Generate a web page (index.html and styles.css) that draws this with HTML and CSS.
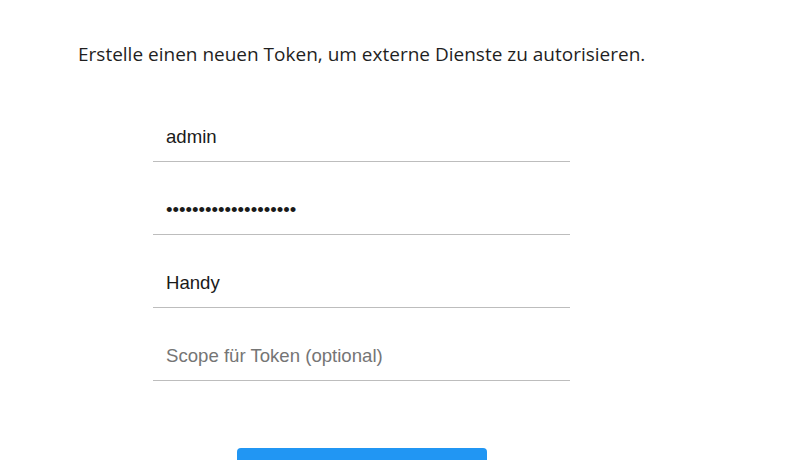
FILE: index.html
```html
<!DOCTYPE html>
<html lang="de">
<head>
<meta charset="utf-8">
<link rel="stylesheet" href="styles.css">
</head>
<body>
<main class="page">
  <p class="intro">Erstelle einen neuen Token, um externe Dienste zu autorisieren.</p>
  <form class="form">
    <input class="field" type="text" value="admin">
    <input class="field" type="password" value="abcdefghijklmnopqrst">
    <input class="field" type="text" value="Handy">
    <input class="field" type="text" placeholder="Scope für Token (optional)">
    <button class="btn" type="button">Token erstellen</button>
  </form>
</main>
</body>
</html>
```

FILE: styles.css
```css
html, body {
  margin: 0;
  padding: 0;
  background: #ffffff;
}
.page {
  padding: 41px 0 0 78px;
}
.intro {
  margin: 0;
  font-family: "Open Sans", "Noto Sans", sans-serif;
  font-size: 19px;
  line-height: 26px;
  color: #1f1f1f;
}
.form {
  width: 417px;
  margin: 45px 0 0 75px;
  display: flex;
  flex-direction: column;
  gap: 23px;
}
.field {
  box-sizing: border-box;
  height: 50px;
  width: 100%;
  border: none;
  border-bottom: 1.5px solid #bdbdbd;
  padding: 0 13px;
  font-family: "Liberation Sans", Arial, sans-serif;
  font-size: 18.6px;
  color: #1a1a1a;
  background: transparent;
  outline: none;
}
.field::placeholder {
  color: #757575;
}
.btn {
  align-self: center;
  margin-top: 44px;
  width: 250px;
  height: 40px;
  border: none;
  border-radius: 4px;
  background: #2196f3;
  color: #ffffff;
  font-family: "Liberation Sans", Arial, sans-serif;
  font-size: 16px;
}
```
